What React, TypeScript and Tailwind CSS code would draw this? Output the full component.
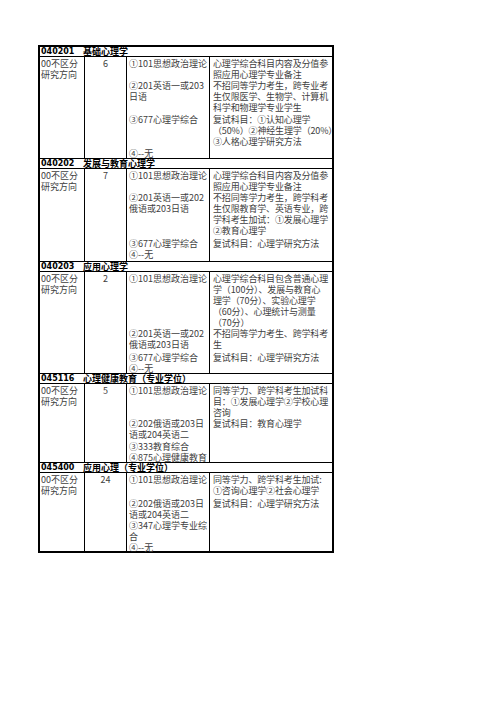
type Row = { c3: string[]; c4: string[] };

type Section = {
  code: string;
  name: string;
  num: string;
  grid: string;
  rows: Row[];
};

const sections: Section[] = [
  {
    code: "040201",
    name: "基础心理学",
    num: "6",
    grid: "grid-rows-[22px_34px_34px_11px]",
    rows: [
      { c3: ["①101思想政治理论"], c4: ["心理学综合科目内容及分值参", "照应用心理学专业备注"] },
      {
        c3: ["②201英语一或203", "日语"],
        c4: ["不招同等学力考生，跨专业考", "生仅限医学、生物学、计算机", "科学和物理学专业学生"],
      },
      {
        c3: ["③677心理学综合"],
        c4: ["复试科目：①认知心理学", "（50%）②神经生理学（20%）", "③人格心理学研究方法"],
      },
      { c3: ["④--无"], c4: [] },
    ],
  },
  {
    code: "040202",
    name: "发展与教育心理学",
    num: "7",
    grid: "grid-rows-[22px_46px_11px_13px]",
    rows: [
      { c3: ["①101思想政治理论"], c4: ["心理学综合科目内容及分值参", "照应用心理学专业备注"] },
      {
        c3: ["②201英语一或202", "俄语或203日语"],
        c4: ["不招同等学力考生，跨学科考", "生仅限教育学、英语专业，跨", "学科考生加试：①发展心理学", "②教育心理学"],
      },
      { c3: ["③677心理学综合"], c4: ["复试科目：心理学研究方法"] },
      { c3: ["④--无"], c4: [] },
    ],
  },
  {
    code: "040203",
    name: "应用心理学",
    num: "2",
    grid: "grid-rows-[55px_24px_11px_11px]",
    rows: [
      {
        c3: ["①101思想政治理论"],
        c4: [
          "心理学综合科目包含普通心理",
          "学（100分）、发展与教育心",
          "理学（70分）、实验心理学",
          "（60分）、心理统计与测量",
          "（70分）",
        ],
      },
      { c3: ["②201英语一或202", "俄语或203日语"], c4: ["不招同等学力考生、跨学科考", "生"] },
      { c3: ["③677心理学综合"], c4: ["复试科目：心理学研究方法"] },
      { c3: ["④--无"], c4: [] },
    ],
  },
  {
    code: "045116",
    name: "心理健康教育（专业学位）",
    num: "5",
    grid: "grid-rows-[33px_23px_11px_11px]",
    rows: [
      {
        c3: ["①101思想政治理论"],
        c4: ["同等学力、跨学科考生加试科", "目：①发展心理学②学校心理", "咨询"],
      },
      { c3: ["②202俄语或203日", "语或204英语二"], c4: ["复试科目：教育心理学"] },
      { c3: ["③333教育综合"], c4: [] },
      { c3: ["④875心理健康教育"], c4: [] },
    ],
  },
  {
    code: "045400",
    name: "应用心理（专业学位）",
    num: "24",
    grid: "grid-rows-[24px_22px_22px_10px]",
    rows: [
      { c3: ["①101思想政治理论"], c4: ["同等学力、跨学科考生加试:", "①咨询心理学②社会心理学"] },
      { c3: ["②202俄语或203日", "语或204英语二"], c4: ["复试科目：心理学研究方法"] },
      { c3: ["③347心理学专业综", "合"], c4: [] },
      { c3: ["④--无"], c4: [] },
    ],
  },
];

export default function App() {
  return (
    <div className="min-h-screen bg-white pt-[45px] pl-[38px]">
      <div className="w-[296px] border-2 border-black font-['Noto_Sans_CJK_SC',sans-serif] text-[9px] text-[#404040]">
        {sections.map((s, si) => (
          <div key={s.code}>
            <div
              className={
                si === 0
                  ? "h-[10px] border-b border-black flex items-center pl-[1px] text-black font-bold leading-[9px]"
                  : "h-[11px] border-y border-black flex items-center pl-[1px] text-black font-bold leading-[9px]"
              }
            >
              <span className="w-[42px] font-['DejaVu_Sans',sans-serif] text-[8px]">{s.code}</span>
              <span>{s.name}</span>
            </div>
            <div className={`grid grid-cols-[44px_42px_83px_123px] ${s.grid}`}>
              <div className="row-span-4 pl-[1px] pt-[1px] whitespace-pre leading-[11px]">{"00不区分\n研究方向"}</div>
              <div className="row-span-4 border-l border-black pt-[1px] text-center leading-[11px]">{s.num}</div>
              {s.rows.map((r, ri) => [
                <div key={`a${ri}`} className="border-l border-black pl-[2px] pt-[1px] whitespace-pre leading-[11px]">
                  {r.c3.join("\n")}
                </div>,
                <div
                  key={`b${ri}`}
                  className="border-l border-black pl-[3px] pt-[1px] whitespace-pre leading-[11px] tracking-[-0.15px]"
                >
                  {r.c4.join("\n")}
                </div>,
              ])}
            </div>
          </div>
        ))}
      </div>
    </div>
  );
}
